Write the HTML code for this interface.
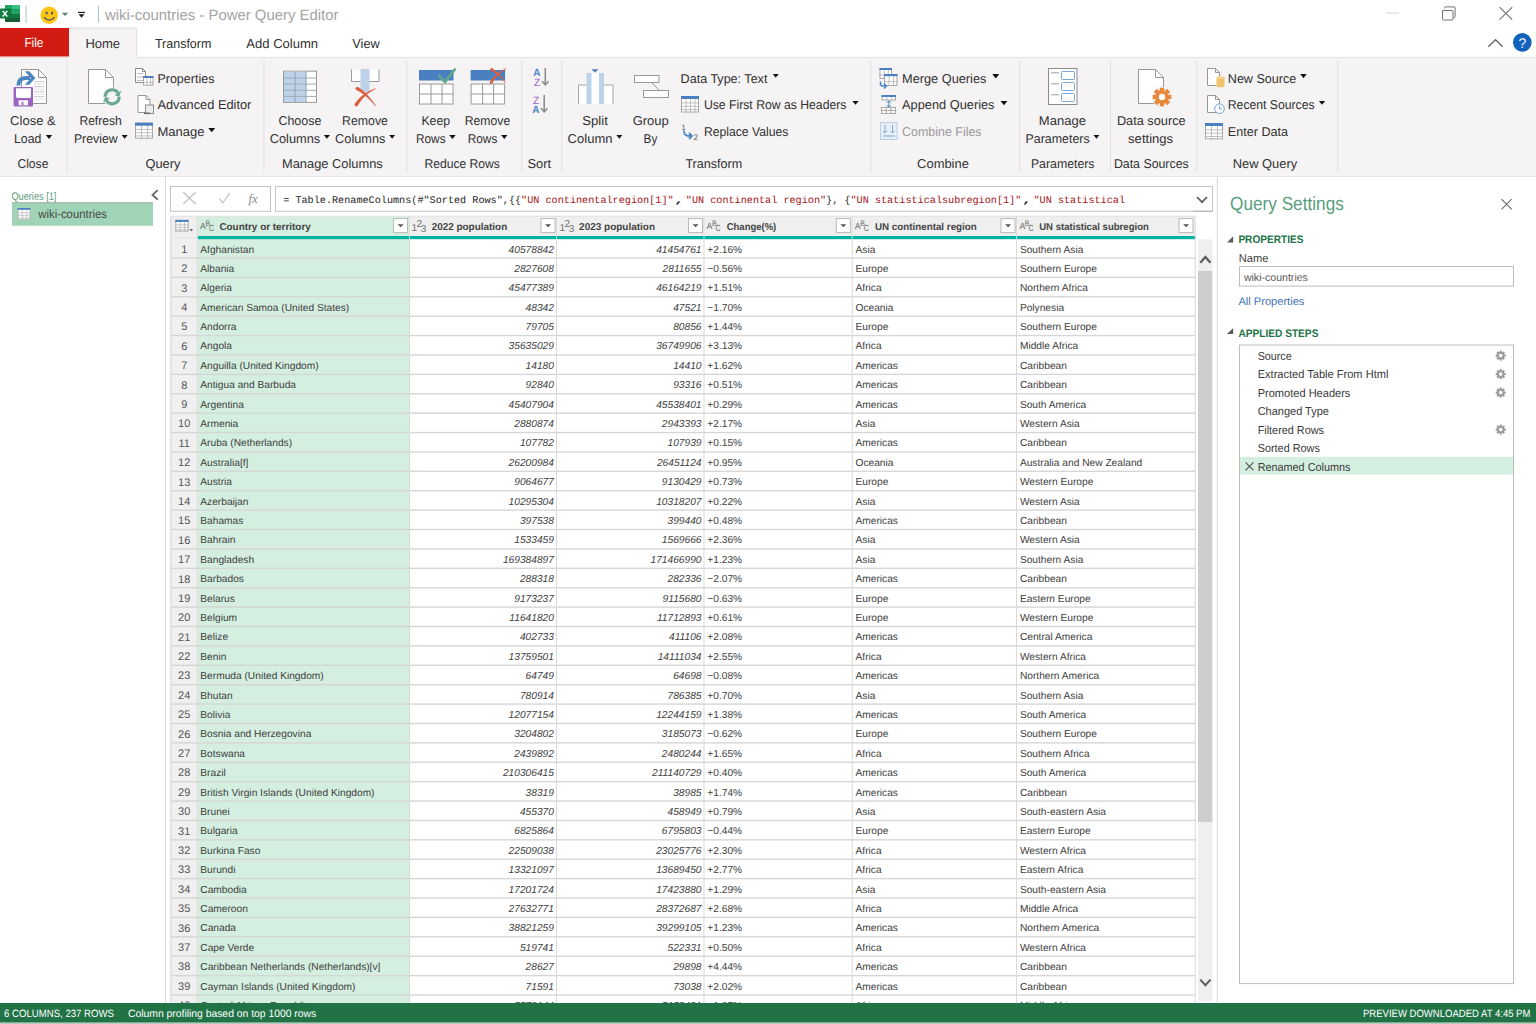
<!DOCTYPE html><html><head><meta charset="utf-8"><title>wiki-countries - Power Query Editor</title><style>html,body{margin:0;padding:0;background:#fff;overflow:hidden;width:1536px;height:1024px}svg{display:block;font-family:"Liberation Sans",sans-serif}</style></head><body>
<svg width="1536" height="1024" viewBox="0 0 1536 1024" text-rendering="geometricPrecision">
<rect x="0" y="0" width="1536" height="1024" fill="#ffffff" />
<g><rect x="5" y="5" width="15" height="17" rx="0.8" fill="#185c37"/><rect x="5" y="5" width="7" height="4.6" fill="#21a366"/><rect x="12" y="5" width="8" height="4.6" rx="0.6" fill="#33c481"/><rect x="5" y="9.6" width="15" height="4.4" fill="#21a366"/><rect x="5" y="14" width="15" height="4.2" fill="#107c41"/><rect x="0" y="8.6" width="10.6" height="9.9" rx="0.6" fill="#0f7b3f"/><rect x="10.6" y="9" width="0.8" height="9.5" fill="#0d5a30" opacity="0.6"/><path d="M2.7 10.9l4.6 5.6M7.3 10.9l-4.6 5.6" stroke="#fff" stroke-width="1.4"/></g>
<rect x="25.6" y="6" width="1" height="17" fill="#a9c6bb"/>
<circle cx="49.2" cy="15.2" r="8.7" fill="#fdc617"/><ellipse cx="46.6" cy="13" rx="1.2" ry="1.55" fill="#555a60"/><ellipse cx="52" cy="13" rx="1.2" ry="1.55" fill="#555a60"/><path d="M44 17.3q5.2 5.6 10.6 0" stroke="#555a60" stroke-width="1.4" fill="none"/>
<path d="M61.8 12.7h6.4l-3.2 3.4z" fill="#5e7f73"/>
<rect x="78" y="11.8" width="7" height="1.2" fill="#222"/><path d="M78.5 14.3h6l-3 3.4z" fill="#222"/>
<rect x="98" y="6" width="1" height="17" fill="#a9c6bb"/>
<text x="105.00" y="19.50" font-size="15" fill="#a4a4a4" textLength="233.40" lengthAdjust="spacingAndGlyphs" >wiki-countries - Power Query Editor</text>
<rect x="1386" y="12.5" width="13" height="1" fill="#d4d4d4"/>
<path d="M1442.5 10.5h9.5a1 1 0 0 1 1 1v7.5a1 1 0 0 1-1 1h-8.5a1 1 0 0 1-1-1z" fill="none" stroke="#707070" stroke-width="1"/><path d="M1444.5 8.5v-0.6a1 1 0 0 1 1-1h8.6a1 1 0 0 1 1 1v8.6a1 1 0 0 1-1 1h-0.6" fill="none" stroke="#707070" stroke-width="1"/>
<path d="M1499.6 7.2l12.6 12.4M1512.2 7.2l-12.6 12.4" stroke="#707070" stroke-width="1.1"/>
<rect x="0" y="28" width="69" height="28.5" fill="#d21c13" />
<text x="24.40" y="47.30" font-size="13" fill="#ffffff" textLength="19.00" lengthAdjust="spacingAndGlyphs" >File</text>
<rect x="69" y="27.7" width="67.5" height="30" fill="#f5f3f4" />
<rect x="69" y="27.7" width="68" height="1" fill="#dedede"/>
<rect x="136.2" y="27.7" width="1" height="29.900000000000002" fill="#dedede"/>
<text x="85.40" y="47.80" font-size="13" fill="#303030" textLength="34.70" lengthAdjust="spacingAndGlyphs" >Home</text>
<text x="154.90" y="47.80" font-size="13" fill="#303030" textLength="56.50" lengthAdjust="spacingAndGlyphs" >Transform</text>
<text x="246.30" y="47.80" font-size="13" fill="#303030" textLength="71.80" lengthAdjust="spacingAndGlyphs" >Add Column</text>
<text x="352.30" y="47.80" font-size="13" fill="#303030" textLength="27.50" lengthAdjust="spacingAndGlyphs" >View</text>
<path d="M1488.3 46.8l7.2-7.1 7.2 7.1" fill="none" stroke="#6b6b6b" stroke-width="1.5"/>
<circle cx="1522.3" cy="42.4" r="9.3" fill="#1262bd"/>
<text x="1522.30" y="47.60" font-size="14" fill="#ffffff" text-anchor="middle" >?</text>
<rect x="0" y="57.6" width="1536" height="119" fill="#f5f3f4" />
<rect x="0" y="57" width="69" height="1" fill="#e3e3e3"/>
<rect x="136.5" y="57" width="1399.5" height="1" fill="#e3e3e3"/>
<rect x="0" y="176" width="1536" height="1" fill="#e3e3e3"/>
<rect x="66.6" y="61" width="1" height="110.5" fill="#e2e0e1"/>
<rect x="263.4" y="61" width="1" height="110.5" fill="#e2e0e1"/>
<rect x="406.2" y="61" width="1" height="110.5" fill="#e2e0e1"/>
<rect x="521.2" y="61" width="1" height="110.5" fill="#e2e0e1"/>
<rect x="561.4" y="61" width="1" height="110.5" fill="#e2e0e1"/>
<rect x="870.3" y="61" width="1" height="110.5" fill="#e2e0e1"/>
<rect x="1019.2" y="61" width="1" height="110.5" fill="#e2e0e1"/>
<rect x="1110.0" y="61" width="1" height="110.5" fill="#e2e0e1"/>
<rect x="1196.3" y="61" width="1" height="110.5" fill="#e2e0e1"/>
<rect x="1337.3" y="61" width="1" height="110.5" fill="#e2e0e1"/>
<path d="M21.5 69.5h17l8 8v26h-25z" fill="#ffffff" stroke="#979797" stroke-width="1"/><path d="M38.5 69.5v8h8" fill="none" stroke="#979797" stroke-width="1"/>
<rect x="34" y="81.2" width="10.5" height="1" fill="#c9c9c9"/>
<rect x="34" y="83.7" width="10.5" height="1" fill="#e2e2e2"/>
<rect x="34" y="86.2" width="10.5" height="1" fill="#c9c9c9"/>
<rect x="34" y="88.7" width="10.5" height="1" fill="#e2e2e2"/>
<rect x="34" y="91.2" width="10.5" height="1" fill="#c9c9c9"/>
<rect x="34" y="93.7" width="10.5" height="1" fill="#e2e2e2"/>
<rect x="34" y="96.2" width="10.5" height="1" fill="#c9c9c9"/>
<rect x="34" y="98.7" width="10.5" height="1" fill="#e2e2e2"/>
<path d="M18.3 85.5 C18.3 80.5 21 78 26.5 78 H30" fill="none" stroke="#4a86c0" stroke-width="3.8"/><path d="M24.8 71.2 H29.2 L35.4 78 L29.2 84.8 H24.8 L31 78z" fill="#4a86c0"/>
<rect x="13.6" y="87" width="19.4" height="19.5" rx="1.3" fill="#9b62c0"/><path d="M16 88.2h15v8.4a1.4 1.4 0 0 1-1.4 1.4h-12.2a1.4 1.4 0 0 1-1.4-1.4z" fill="#ffffff"/><rect x="18.6" y="100.3" width="9.4" height="5" fill="#ffffff"/><rect x="21.6" y="101.8" width="1.8" height="3.5" fill="#9b62c0"/>
<text x="10.10" y="124.90" font-size="12.8" fill="#303030" textLength="45.70" lengthAdjust="spacingAndGlyphs" >Close &amp;</text>
<text x="14.00" y="142.90" font-size="12.8" fill="#303030" textLength="27.30" lengthAdjust="spacingAndGlyphs" >Load</text>
<path d="M45.8 135.0h6.4l-3.2 3.968z" fill="#111111"/>
<text x="17.40" y="167.90" font-size="12.8" fill="#303030" textLength="31.00" lengthAdjust="spacingAndGlyphs" >Close</text>
<path d="M88.5 69.5h17l8 8v26h-25z" fill="#ffffff" stroke="#979797" stroke-width="1"/><path d="M105.5 69.5v8h8" fill="none" stroke="#979797" stroke-width="1"/>
<circle cx="112.2" cy="96.8" r="9.6" fill="#f5f3f4"/>
<g><path d="M105.20 96.80A7.0 7.0 0 0 1 118.14 93.09" fill="none" stroke="#6aa893" stroke-width="3.1"/><path d="M119.20 96.80L121.43 90.81L114.72 95.17z" fill="#6aa893"/><path d="M119.20 96.80A7.0 7.0 0 0 1 106.26 100.51" fill="none" stroke="#6aa893" stroke-width="3.1"/><path d="M105.20 96.80L102.97 102.79L109.68 98.43z" fill="#6aa893"/></g>
<text x="79.40" y="124.90" font-size="12.8" fill="#303030" textLength="42.40" lengthAdjust="spacingAndGlyphs" >Refresh</text>
<text x="73.90" y="142.90" font-size="12.8" fill="#303030" textLength="43.70" lengthAdjust="spacingAndGlyphs" >Preview</text>
<path d="M121.6 135.0h6.100000000000003l-3.0500000000000016 3.782000000000002z" fill="#111111"/>
<path d="M135.5 68.5h7l3 3v11h-10z" fill="#ffffff" stroke="#8c8c8c" stroke-width="1"/><path d="M142.5 68.5v3h3" fill="none" stroke="#8c8c8c" stroke-width="1"/>
<rect x="137" y="73" width="6" height="1" fill="#b9b9b9"/>
<rect x="137" y="76.5" width="6" height="1" fill="#b9b9b9"/>
<rect x="137" y="80" width="6" height="1" fill="#b9b9b9"/>
<rect x="143.5" y="76.5" width="9.5" height="8.6" fill="#ffffff" stroke="#a8a8a8" stroke-width="1"/>
<rect x="146.5" y="76" width="1" height="9.6" fill="#a8a8a8" opacity="0.7"/>
<rect x="150.0" y="76" width="1" height="9.6" fill="#a8a8a8" opacity="0.7"/>
<rect x="143" y="81.8" width="10.5" height="1" fill="#a8a8a8" opacity="0.7"/>
<rect x="143" y="76" width="10.5" height="2" fill="#4b7fc1" />
<text x="157.40" y="82.50" font-size="12.8" fill="#303030" textLength="57.00" lengthAdjust="spacingAndGlyphs" >Properties</text>
<path d="M138.0 95.5h8l4 4v13h-12z" fill="#ffffff" stroke="#979797" stroke-width="1"/><path d="M146.0 95.5v4h4" fill="none" stroke="#979797" stroke-width="1"/>
<rect x="145.5" y="105" width="8" height="8.5" fill="#ececec" stroke="#8c8c8c" stroke-width="1"/><rect x="144" y="112.5" width="6" height="1.6" fill="#6a6a6a"/>
<text x="157.40" y="109.30" font-size="12.8" fill="#303030" textLength="94.00" lengthAdjust="spacingAndGlyphs" >Advanced Editor</text>
<rect x="135.5" y="123.2" width="17" height="15" fill="#ffffff" stroke="#a8a8a8" stroke-width="1"/>
<rect x="141.0" y="122.7" width="1" height="16" fill="#a8a8a8" opacity="0.7"/>
<rect x="147.0" y="122.7" width="1" height="16" fill="#a8a8a8" opacity="0.7"/>
<rect x="135" y="128.9" width="18" height="1" fill="#a8a8a8" opacity="0.7"/>
<rect x="135" y="132.2" width="18" height="1" fill="#a8a8a8" opacity="0.7"/>
<rect x="135" y="135.4" width="18" height="1" fill="#a8a8a8" opacity="0.7"/>
<rect x="135" y="122.7" width="18" height="3" fill="#4b7fc1" />
<text x="157.40" y="136.40" font-size="12.8" fill="#303030" textLength="47.00" lengthAdjust="spacingAndGlyphs" >Manage</text>
<path d="M208.3 128.00000000000003h6.9l-3.45 4.2780000000000005z" fill="#111111"/>
<text x="145.40" y="167.90" font-size="12.8" fill="#303030" textLength="35.00" lengthAdjust="spacingAndGlyphs" >Query</text>
<rect x="283.5" y="71.2" width="33" height="31.2" fill="#ffffff" stroke="#9a9a9a" stroke-width="1"/>
<rect x="284" y="71.7" width="22" height="30.3" fill="#bcd3ea" />
<rect x="294.6" y="71.5" width="1" height="31.0" fill="#9aa4ad"/>
<rect x="305.6" y="71.5" width="1" height="31.0" fill="#9aa4ad"/>
<rect x="283.5" y="77.5" width="33.0" height="1" fill="#a3acb3"/>
<rect x="283.5" y="83.6" width="33.0" height="1" fill="#a3acb3"/>
<rect x="283.5" y="89.8" width="33.0" height="1" fill="#a3acb3"/>
<rect x="283.5" y="95.9" width="33.0" height="1" fill="#a3acb3"/>
<path d="M351.5 69.5v12h27.5v-12" fill="#ffffff" stroke="#9a9a9a" stroke-width="1"/>
<rect x="360.5" y="69" width="9" height="23" fill="#bdd2e8" />
<path d="M356.38 90.09L357.76 90.78L359.14 91.54L360.52 92.37L361.89 93.28L363.26 94.25L364.62 95.30L365.98 96.41L367.33 97.60L368.67 98.86L370.01 100.19L371.34 101.60L372.66 103.07L373.97 104.62L375.27 106.23L375.93 105.77L374.76 104.02L373.58 102.34L372.38 100.72L371.17 99.17L369.93 97.68L368.69 96.25L367.42 94.89L366.14 93.59L364.83 92.35L363.51 91.17L362.17 90.06L360.81 89.01L359.43 88.03L358.02 87.11z" fill="#dc5f42"/><circle cx="357.2" cy="88.6" r="1.7" fill="#dc5f42"/>
<path d="M357.82 105.56L358.68 104.08L359.61 102.65L360.59 101.26L361.64 99.92L362.75 98.61L363.93 97.36L365.18 96.15L366.49 94.98L367.86 93.86L369.31 92.79L370.82 91.76L372.40 90.78L374.04 89.85L375.76 88.97L375.44 88.23L373.62 88.95L371.84 89.72L370.12 90.55L368.45 91.43L366.84 92.38L365.28 93.39L363.77 94.45L362.32 95.58L360.92 96.77L359.58 98.02L358.29 99.33L357.06 100.71L355.89 102.14L354.78 103.64z" fill="#dc5f42"/><circle cx="356.3" cy="104.6" r="1.8" fill="#dc5f42"/>
<text x="278.40" y="124.90" font-size="12.8" fill="#303030" textLength="43.00" lengthAdjust="spacingAndGlyphs" >Choose</text>
<text x="269.80" y="142.90" font-size="12.8" fill="#303030" textLength="50.40" lengthAdjust="spacingAndGlyphs" >Columns</text>
<path d="M323.8 135.0h6.200000000000012l-3.100000000000006 3.8440000000000074z" fill="#111111"/>
<text x="342.00" y="124.90" font-size="12.8" fill="#303030" textLength="45.90" lengthAdjust="spacingAndGlyphs" >Remove</text>
<text x="335.10" y="142.90" font-size="12.8" fill="#303030" textLength="50.30" lengthAdjust="spacingAndGlyphs" >Columns</text>
<path d="M389.2 135.0h5.9l-2.95 3.6580000000000004z" fill="#111111"/>
<text x="282.00" y="167.90" font-size="12.8" fill="#303030" textLength="100.80" lengthAdjust="spacingAndGlyphs" >Manage Columns</text>
<rect x="419" y="70" width="34.5" height="10.5" fill="#4a7fc0" />
<rect x="419.5" y="84" width="33.5" height="20" fill="#ffffff" stroke="#9a9a9a" stroke-width="1"/>
<rect x="430.5" y="84" width="1" height="20" fill="#9a9a9a"/>
<rect x="441.5" y="84" width="1" height="20" fill="#9a9a9a"/>
<rect x="419" y="93.5" width="34.5" height="1" fill="#9a9a9a"/>
<path d="M438.5 75.5 L445 82 L455.5 68.5" stroke="#5ea98a" stroke-width="2.6" fill="none"/>
<rect x="470.6" y="70" width="34.5" height="10.5" fill="#4a7fc0" />
<rect x="471.1" y="84" width="33.5" height="20" fill="#ffffff" stroke="#9a9a9a" stroke-width="1"/>
<rect x="482.1" y="84" width="1" height="20" fill="#9a9a9a"/>
<rect x="493.1" y="84" width="1" height="20" fill="#9a9a9a"/>
<rect x="470.6" y="93.5" width="34.5" height="1" fill="#9a9a9a"/>
<path d="M492.42 83.19L493.04 82.00L493.71 80.84L494.43 79.71L495.22 78.60L496.05 77.51L496.95 76.45L497.90 75.41L498.91 74.40L499.97 73.42L501.10 72.46L502.28 71.53L503.52 70.63L504.81 69.75L506.17 68.91L505.83 68.29L504.38 69.02L502.98 69.78L501.63 70.58L500.32 71.42L499.07 72.29L497.86 73.19L496.70 74.14L495.59 75.12L494.53 76.14L493.52 77.20L492.56 78.29L491.65 79.43L490.79 80.60L489.98 81.81z" fill="#dc5f42"/><circle cx="491.2" cy="82.5" r="1.4" fill="#dc5f42"/>
<path d="M490.90 70.40L491.96 71.01L493.01 71.67L494.06 72.37L495.10 73.11L496.14 73.90L497.17 74.74L498.20 75.62L499.22 76.54L500.24 77.51L501.25 78.52L502.25 79.57L503.25 80.67L504.24 81.82L505.22 83.01L505.78 82.59L504.90 81.31L504.00 80.06L503.10 78.86L502.18 77.69L501.25 76.57L500.30 75.48L499.35 74.43L498.38 73.42L497.40 72.46L496.41 71.53L495.40 70.64L494.38 69.78L493.35 68.97L492.30 68.20z" fill="#dc5f42"/><circle cx="491.6" cy="69.3" r="1.3" fill="#dc5f42"/>
<text x="421.40" y="124.90" font-size="12.8" fill="#303030" textLength="28.80" lengthAdjust="spacingAndGlyphs" >Keep</text>
<text x="415.90" y="142.90" font-size="12.8" fill="#303030" textLength="29.70" lengthAdjust="spacingAndGlyphs" >Rows</text>
<path d="M449.2 135.0h6.500000000000023l-3.2500000000000115 4.0300000000000145z" fill="#111111"/>
<text x="464.70" y="124.90" font-size="12.8" fill="#303030" textLength="45.50" lengthAdjust="spacingAndGlyphs" >Remove</text>
<text x="467.70" y="142.90" font-size="12.8" fill="#303030" textLength="29.70" lengthAdjust="spacingAndGlyphs" >Rows</text>
<path d="M501.1 135.0h6.299999999999978l-3.149999999999989 3.905999999999986z" fill="#111111"/>
<text x="424.40" y="167.90" font-size="12.8" fill="#303030" textLength="75.50" lengthAdjust="spacingAndGlyphs" >Reduce Rows</text>
<text x="533.20" y="76.20" font-size="10.5" fill="#4a86c8" font-weight="700" textLength="7.20" lengthAdjust="spacingAndGlyphs" >A</text>
<text x="534.00" y="85.80" font-size="10.5" fill="#9c64c6" textLength="6.20" lengthAdjust="spacingAndGlyphs" >Z</text>
<path d="M545.3 68v16.3M542 81.2l3.3 3.6 3.3-3.6" stroke="#8a8a8a" stroke-width="1.5" fill="none"/>
<text x="533.00" y="103.60" font-size="10.5" fill="#9c64c6" textLength="6.20" lengthAdjust="spacingAndGlyphs" >Z</text>
<text x="532.30" y="113.00" font-size="10.5" fill="#4a86c8" font-weight="700" textLength="7.20" lengthAdjust="spacingAndGlyphs" >A</text>
<path d="M544.2 95v16.3M540.9 108.2l3.3 3.6 3.3-3.6" stroke="#8a8a8a" stroke-width="1.5" fill="none"/>
<text x="527.40" y="167.90" font-size="12.8" fill="#303030" textLength="23.70" lengthAdjust="spacingAndGlyphs" >Sort</text>
<path d="M578.5 104v-19h8v-12h13v12h13.5v19z" fill="#ffffff"/><path d="M578.5 104v-19h8M599.5 85h13.5v19" fill="none" stroke="#a8a8a8" stroke-width="1"/>
<rect x="586.5" y="73" width="5" height="31" fill="#bcd3ea" />
<rect x="599" y="73" width="5" height="31" fill="#bcd3ea" />
<path d="M591.5 69.2h7l-3.5 3.3z" fill="#4a7fc0"/>
<text x="582.20" y="124.90" font-size="12.8" fill="#303030" textLength="25.70" lengthAdjust="spacingAndGlyphs" >Split</text>
<text x="567.60" y="142.90" font-size="12.8" fill="#303030" textLength="44.90" lengthAdjust="spacingAndGlyphs" >Column</text>
<path d="M616.4 135.0h5.9l-2.95 3.6580000000000004z" fill="#111111"/>
<rect x="634.5" y="75.5" width="24.5" height="7" fill="#ffffff" stroke="#9a9a9a" stroke-width="1"/><rect x="643.5" y="90.5" width="25" height="7" fill="#ffffff" stroke="#9a9a9a" stroke-width="1"/><path d="M651.5 82.5L659.5 90.5" stroke="#9a9a9a" stroke-width="1"/>
<text x="632.70" y="124.90" font-size="12.8" fill="#303030" textLength="36.00" lengthAdjust="spacingAndGlyphs" >Group</text>
<text x="643.50" y="142.90" font-size="12.8" fill="#303030" textLength="13.80" lengthAdjust="spacingAndGlyphs" >By</text>
<text x="680.60" y="82.50" font-size="12.8" fill="#303030" textLength="86.80" lengthAdjust="spacingAndGlyphs" >Data Type: Text</text>
<path d="M772.8 74.1h5.9l-2.95 3.6580000000000004z" fill="#111111"/>
<rect x="681.5" y="96.5" width="17" height="15.5" fill="#ffffff" stroke="#a8a8a8" stroke-width="1"/>
<rect x="685.5" y="96" width="1" height="16.5" fill="#a8a8a8" opacity="0.7"/>
<rect x="690.0" y="96" width="1" height="16.5" fill="#a8a8a8" opacity="0.7"/>
<rect x="694.5" y="96" width="1" height="16.5" fill="#a8a8a8" opacity="0.7"/>
<rect x="681" y="102.4" width="18" height="1" fill="#a8a8a8" opacity="0.7"/>
<rect x="681" y="105.8" width="18" height="1" fill="#a8a8a8" opacity="0.7"/>
<rect x="681" y="109.1" width="18" height="1" fill="#a8a8a8" opacity="0.7"/>
<rect x="681" y="96" width="18" height="3" fill="#4b7fc1" />
<text x="703.90" y="109.30" font-size="12.8" fill="#303030" textLength="142.50" lengthAdjust="spacingAndGlyphs" >Use First Row as Headers</text>
<path d="M852.3 100.89999999999999h6.4l-3.2 3.968z" fill="#111111"/>
<text x="681.50" y="130.00" font-size="7.5" fill="#555" >1</text>
<path d="M684 130.5 C684 135 686 136 691 136" stroke="#4a86c8" stroke-width="1.8" fill="none"/><path d="M689 133 l3 3 -3 3" stroke="#4a86c8" stroke-width="1.8" fill="none"/>
<text x="693.50" y="139.50" font-size="8" fill="#555" >2</text>
<text x="703.90" y="136.40" font-size="12.8" fill="#303030" textLength="84.50" lengthAdjust="spacingAndGlyphs" >Replace Values</text>
<text x="685.40" y="167.90" font-size="12.8" fill="#303030" textLength="56.80" lengthAdjust="spacingAndGlyphs" >Transform</text>
<rect x="880.0" y="68.5" width="11.5" height="10" fill="#ffffff" stroke="#a8a8a8" stroke-width="1"/>
<rect x="883.7" y="68" width="1" height="11" fill="#a8a8a8" opacity="0.7"/>
<rect x="887.8" y="68" width="1" height="11" fill="#a8a8a8" opacity="0.7"/>
<rect x="879.5" y="74.5" width="12.5" height="1" fill="#a8a8a8" opacity="0.7"/>
<rect x="879.5" y="68" width="12.5" height="2" fill="#4b7fc1" />
<rect x="884.5" y="74.5" width="12.5" height="11" fill="#ffffff" stroke="#a8a8a8" stroke-width="1"/>
<rect x="888.5" y="74" width="1" height="12" fill="#a8a8a8" opacity="0.7"/>
<rect x="893.0" y="74" width="1" height="12" fill="#a8a8a8" opacity="0.7"/>
<rect x="884" y="81.1" width="13.5" height="1" fill="#a8a8a8" opacity="0.7"/>
<rect x="884" y="74" width="13.5" height="2.2" fill="#4b7fc1" />
<path d="M880.5 81.5v2.5a2 2 0 0 0 2 2h3" stroke="#4a86c8" stroke-width="1.6" fill="none"/><path d="M884 83.5l2.5 2.5-2.5 2.5" stroke="#4a86c8" stroke-width="1.5" fill="none"/>
<text x="902.00" y="82.50" font-size="12.8" fill="#303030" textLength="84.40" lengthAdjust="spacingAndGlyphs" >Merge Queries</text>
<path d="M992.3 74.1h6.9l-3.45 4.2780000000000005z" fill="#111111"/>
<rect x="882.0" y="95.5" width="13.5" height="4.5" fill="#ffffff" stroke="#a8a8a8" stroke-width="1"/>
<rect x="886.3" y="95" width="1" height="5.5" fill="#a8a8a8" opacity="0.7"/>
<rect x="891.2" y="95" width="1" height="5.5" fill="#a8a8a8" opacity="0.7"/>
<rect x="881.5" y="95" width="14.5" height="2" fill="#4b7fc1" />
<path d="M888.8 101v6M886.8 102.8l2 -2 2 2M886.8 105.2l2 2 2-2" stroke="#4a86c8" stroke-width="1" fill="none"/>
<rect x="881.5" y="107.5" width="14" height="6" fill="#ffffff" stroke="#a8a8a8" stroke-width="1"/><path d="M886.2 107.5v6M890.8 107.5v6M881.5 110.5h14" stroke="#a8a8a8" stroke-width="1"/>
<text x="902.00" y="109.30" font-size="12.8" fill="#303030" textLength="92.50" lengthAdjust="spacingAndGlyphs" >Append Queries</text>
<path d="M1000.5 100.89999999999999h6.9l-3.45 4.2780000000000005z" fill="#111111"/>
<rect x="880.5" y="122.5" width="16.5" height="17" fill="#e6eef8" stroke="#b9cde6" stroke-width="1"/><path d="M885 125v8M882.8 130.8l2.2 2.2 2.2-2.2M892.5 125v8M890.3 130.8l2.2 2.2 2.2-2.2M883 136h12" stroke="#8aa6c8" stroke-width="1" fill="none"/>
<text x="902.00" y="136.40" font-size="12.8" fill="#9a9a9a" textLength="79.60" lengthAdjust="spacingAndGlyphs" >Combine Files</text>
<text x="917.10" y="167.90" font-size="12.8" fill="#303030" textLength="51.80" lengthAdjust="spacingAndGlyphs" >Combine</text>
<rect x="1048.5" y="68.5" width="28.5" height="36" fill="#ffffff" stroke="#8c8c8c" stroke-width="1"/>
<rect x="1051" y="72.3" width="8" height="1" fill="#a0a0a0"/>
<rect x="1061.5" y="71.5" width="13" height="8" rx="1" fill="#ffffff" stroke="#7aa5d8" stroke-width="1"/>
<rect x="1051" y="83.3" width="8" height="1" fill="#a0a0a0"/>
<rect x="1061.5" y="82.5" width="13" height="8" rx="1" fill="#ffffff" stroke="#7aa5d8" stroke-width="1"/>
<rect x="1051" y="94.3" width="8" height="1" fill="#a0a0a0"/>
<rect x="1061.5" y="93.5" width="13" height="8" rx="1" fill="#ffffff" stroke="#7aa5d8" stroke-width="1"/>
<text x="1038.80" y="124.90" font-size="12.8" fill="#303030" textLength="47.10" lengthAdjust="spacingAndGlyphs" >Manage</text>
<text x="1025.60" y="142.90" font-size="12.8" fill="#303030" textLength="64.00" lengthAdjust="spacingAndGlyphs" >Parameters</text>
<path d="M1093.5 135.0h5.9l-2.95 3.6580000000000004z" fill="#111111"/>
<text x="1030.90" y="167.90" font-size="12.8" fill="#303030" textLength="63.60" lengthAdjust="spacingAndGlyphs" >Parameters</text>
<path d="M1138.5 69.5h17l8 8v26h-25z" fill="#ffffff" stroke="#979797" stroke-width="1"/><path d="M1155.5 69.5v8h8" fill="none" stroke="#979797" stroke-width="1"/>
<circle cx="1162" cy="97" r="10.2" fill="#f5f3f4"/>
<g><rect x="1159.8" y="87.7" width="4.4" height="5" fill="#e8883a" transform="rotate(0 1162 97)"/><rect x="1159.8" y="87.7" width="4.4" height="5" fill="#e8883a" transform="rotate(45 1162 97)"/><rect x="1159.8" y="87.7" width="4.4" height="5" fill="#e8883a" transform="rotate(90 1162 97)"/><rect x="1159.8" y="87.7" width="4.4" height="5" fill="#e8883a" transform="rotate(135 1162 97)"/><rect x="1159.8" y="87.7" width="4.4" height="5" fill="#e8883a" transform="rotate(180 1162 97)"/><rect x="1159.8" y="87.7" width="4.4" height="5" fill="#e8883a" transform="rotate(225 1162 97)"/><rect x="1159.8" y="87.7" width="4.4" height="5" fill="#e8883a" transform="rotate(270 1162 97)"/><rect x="1159.8" y="87.7" width="4.4" height="5" fill="#e8883a" transform="rotate(315 1162 97)"/><circle cx="1162" cy="97" r="6.8" fill="#e8883a"/><circle cx="1162" cy="97" r="3.2" fill="#ffffff"/></g>
<text x="1116.90" y="124.90" font-size="12.8" fill="#303030" textLength="68.70" lengthAdjust="spacingAndGlyphs" >Data source</text>
<text x="1128.10" y="142.90" font-size="12.8" fill="#303030" textLength="45.00" lengthAdjust="spacingAndGlyphs" >settings</text>
<text x="1113.90" y="167.90" font-size="12.8" fill="#303030" textLength="74.80" lengthAdjust="spacingAndGlyphs" >Data Sources</text>
<path d="M1207.5 68.5h8l4 4v13h-12z" fill="#ffffff" stroke="#979797" stroke-width="1"/><path d="M1215.5 68.5v4h4" fill="none" stroke="#979797" stroke-width="1"/>
<path d="M1216.5 77.5v8.2a4 1.6 0 0 0 8 0v-8.2z" fill="#f0c46c"/><ellipse cx="1220.5" cy="77.5" rx="4" ry="1.6" fill="#f6d48f"/>
<text x="1227.80" y="82.50" font-size="12.8" fill="#303030" textLength="68.50" lengthAdjust="spacingAndGlyphs" >New Source</text>
<path d="M1300.2 74.1h6.499999999999909l-3.2499999999999547 4.029999999999943z" fill="#111111"/>
<path d="M1207.5 95.5h8l4 4v13h-12z" fill="#ffffff" stroke="#979797" stroke-width="1"/><path d="M1215.5 95.5v4h4" fill="none" stroke="#979797" stroke-width="1"/>
<circle cx="1219.5" cy="108.7" r="4.8" fill="#ffffff" stroke="#6f9fd6" stroke-width="1"/><path d="M1219.5 105.8v3.2h2.4" stroke="#6f9fd6" stroke-width="1" fill="none"/>
<text x="1227.80" y="109.30" font-size="12.8" fill="#303030" textLength="86.80" lengthAdjust="spacingAndGlyphs" >Recent Sources</text>
<path d="M1318.8999999999999 100.89999999999999h6.200000000000182l-3.100000000000091 3.844000000000113z" fill="#111111"/>
<rect x="1205.5" y="123.5" width="17" height="15.3" fill="#ffffff" stroke="#a8a8a8" stroke-width="1"/>
<rect x="1211.0" y="123" width="1" height="16.3" fill="#a8a8a8" opacity="0.7"/>
<rect x="1217.0" y="123" width="1" height="16.3" fill="#a8a8a8" opacity="0.7"/>
<rect x="1205" y="129.3" width="18" height="1" fill="#a8a8a8" opacity="0.7"/>
<rect x="1205" y="132.7" width="18" height="1" fill="#a8a8a8" opacity="0.7"/>
<rect x="1205" y="136.0" width="18" height="1" fill="#a8a8a8" opacity="0.7"/>
<rect x="1205" y="123" width="18" height="3" fill="#4b7fc1" />
<text x="1227.80" y="136.40" font-size="12.8" fill="#303030" textLength="60.20" lengthAdjust="spacingAndGlyphs" >Enter Data</text>
<text x="1232.70" y="167.90" font-size="12.8" fill="#303030" textLength="64.50" lengthAdjust="spacingAndGlyphs" >New Query</text>
<rect x="165" y="177" width="1" height="826" fill="#d9d9d9"/>
<text x="11.40" y="199.60" font-size="11" fill="#5d9c7e" textLength="45.00" lengthAdjust="spacingAndGlyphs" >Queries [1]</text>
<path d="M157.8 190.2l-5.3 4.7 5.3 4.7" fill="none" stroke="#666" stroke-width="1.8"/>
<rect x="12" y="202.4" width="141" height="23.3" fill="#9fd5b6" />
<rect x="12" y="202.2" width="141" height="1.2" fill="#a9b4ae"/>
<rect x="18.0" y="208.5" width="12" height="10.8" fill="#ffffff" stroke="#b8b8b8" stroke-width="1"/>
<rect x="21.8" y="208" width="1" height="11.8" fill="#b8b8b8" opacity="0.7"/>
<rect x="26.2" y="208" width="1" height="11.8" fill="#b8b8b8" opacity="0.7"/>
<rect x="17.5" y="212.3" width="13" height="1" fill="#b8b8b8" opacity="0.7"/>
<rect x="17.5" y="214.8" width="13" height="1" fill="#b8b8b8" opacity="0.7"/>
<rect x="17.5" y="217.3" width="13" height="1" fill="#b8b8b8" opacity="0.7"/>
<rect x="17.5" y="208" width="13" height="1.8" fill="#4b7fc1" />
<text x="38.30" y="218.40" font-size="12" fill="#474747" textLength="68.60" lengthAdjust="spacingAndGlyphs" >wiki-countries</text>
<rect x="170.5" y="186.5" width="100" height="24.8" fill="#ffffff" stroke="#c4c4c4" stroke-width="1"/>
<path d="M183.2 192.3l12.6 11.6M195.8 192.3l-12.6 11.6" stroke="#c2c2c2" stroke-width="1.3"/>
<path d="M219.2 198.6l3.6 4.2 7-9.6" stroke="#c2c2c2" stroke-width="1.3" fill="none"/>
<text x="248.50" y="203.00" font-size="13" fill="#8a8a8a" font-family="Liberation Serif" font-style="italic" >fx</text>
<rect x="275.5" y="186.5" width="937" height="24.8" fill="#ffffff" stroke="#c4c4c4" stroke-width="1"/>
<path d="M1197 197l5 5.2 5-5.2" fill="none" stroke="#5e5e5e" stroke-width="1.8"/>
<rect x="1193" y="210.6" width="20" height="1.2" fill="#b8b8b8"/>
<text x="283.20" y="202.60" font-size="10.17" fill="#1e1e1e" font-family="Liberation Mono" textLength="237.90" lengthAdjust="spacingAndGlyphs" >= Table.RenameColumns(#"Sorted Rows",{{</text>
<text x="521.10" y="202.60" font-size="10.17" fill="#a31515" font-family="Liberation Mono" textLength="152.50" lengthAdjust="spacingAndGlyphs" >"UN continentalregion[1]"</text>
<text x="673.60" y="202.60" font-size="10.17" fill="#1e1e1e" font-family="Liberation Mono" textLength="12.20" lengthAdjust="spacingAndGlyphs" >, </text>
<text x="685.80" y="202.60" font-size="10.17" fill="#a31515" font-family="Liberation Mono" textLength="140.30" lengthAdjust="spacingAndGlyphs" >"UN continental region"</text>
<text x="826.10" y="202.60" font-size="10.17" fill="#1e1e1e" font-family="Liberation Mono" textLength="24.40" lengthAdjust="spacingAndGlyphs" >}, {</text>
<text x="850.50" y="202.60" font-size="10.17" fill="#a31515" font-family="Liberation Mono" textLength="170.80" lengthAdjust="spacingAndGlyphs" >"UN statisticalsubregion[1]"</text>
<text x="1021.30" y="202.60" font-size="10.17" fill="#1e1e1e" font-family="Liberation Mono" textLength="12.20" lengthAdjust="spacingAndGlyphs" >, </text>
<text x="1033.50" y="202.60" font-size="10.17" fill="#a31515" font-family="Liberation Mono" textLength="91.50" lengthAdjust="spacingAndGlyphs" >"UN statistical</text>
<rect x="171" y="236" width="26.3" height="767" fill="#f0f0f0" />
<rect x="171" y="237.6" width="26.30000000000001" height="1" fill="#e2e2e2"/>
<rect x="197.8" y="216" width="211.7" height="787" fill="#d4eedf" />
<rect x="171" y="215.8" width="26.3" height="20.19999999999999" fill="#efefef" />
<rect x="410.3" y="215.8" width="146.2" height="20.19999999999999" fill="#efefef" />
<rect x="557.3" y="215.8" width="146.7" height="20.19999999999999" fill="#efefef" />
<rect x="704.8" y="215.8" width="147.40000000000003" height="20.19999999999999" fill="#efefef" />
<rect x="853.0" y="215.8" width="163.49999999999994" height="20.19999999999999" fill="#efefef" />
<rect x="1017.3" y="215.8" width="177.90000000000003" height="20.19999999999999" fill="#efefef" />
<rect x="171" y="215.8" width="1024.5" height="1" fill="#e4e4e4"/>
<rect x="197.8" y="236" width="997.5" height="3.2" fill="#00b3a1" />
<rect x="171" y="257.3" width="1024.5" height="1.4" fill="#d6d6d6"/>
<rect x="171" y="276.69" width="1024.5" height="1.4" fill="#d6d6d6"/>
<rect x="171" y="296.08" width="1024.5" height="1.4" fill="#d6d6d6"/>
<rect x="171" y="315.48" width="1024.5" height="1.4" fill="#d6d6d6"/>
<rect x="171" y="334.88" width="1024.5" height="1.4" fill="#d6d6d6"/>
<rect x="171" y="354.27" width="1024.5" height="1.4" fill="#d6d6d6"/>
<rect x="171" y="373.67" width="1024.5" height="1.4" fill="#d6d6d6"/>
<rect x="171" y="393.06" width="1024.5" height="1.4" fill="#d6d6d6"/>
<rect x="171" y="412.45" width="1024.5" height="1.4" fill="#d6d6d6"/>
<rect x="171" y="431.85" width="1024.5" height="1.4" fill="#d6d6d6"/>
<rect x="171" y="451.25" width="1024.5" height="1.4" fill="#d6d6d6"/>
<rect x="171" y="470.64" width="1024.5" height="1.4" fill="#d6d6d6"/>
<rect x="171" y="490.04" width="1024.5" height="1.4" fill="#d6d6d6"/>
<rect x="171" y="509.43" width="1024.5" height="1.4" fill="#d6d6d6"/>
<rect x="171" y="528.82" width="1024.5" height="1.4" fill="#d6d6d6"/>
<rect x="171" y="548.22" width="1024.5" height="1.4" fill="#d6d6d6"/>
<rect x="171" y="567.61" width="1024.5" height="1.4" fill="#d6d6d6"/>
<rect x="171" y="587.01" width="1024.5" height="1.4" fill="#d6d6d6"/>
<rect x="171" y="606.4" width="1024.5" height="1.4" fill="#d6d6d6"/>
<rect x="171" y="625.8" width="1024.5" height="1.4" fill="#d6d6d6"/>
<rect x="171" y="645.19" width="1024.5" height="1.4" fill="#d6d6d6"/>
<rect x="171" y="664.59" width="1024.5" height="1.4" fill="#d6d6d6"/>
<rect x="171" y="683.98" width="1024.5" height="1.4" fill="#d6d6d6"/>
<rect x="171" y="703.38" width="1024.5" height="1.4" fill="#d6d6d6"/>
<rect x="171" y="722.77" width="1024.5" height="1.4" fill="#d6d6d6"/>
<rect x="171" y="742.17" width="1024.5" height="1.4" fill="#d6d6d6"/>
<rect x="171" y="761.56" width="1024.5" height="1.4" fill="#d6d6d6"/>
<rect x="171" y="780.96" width="1024.5" height="1.4" fill="#d6d6d6"/>
<rect x="171" y="800.36" width="1024.5" height="1.4" fill="#d6d6d6"/>
<rect x="171" y="819.75" width="1024.5" height="1.4" fill="#d6d6d6"/>
<rect x="171" y="839.14" width="1024.5" height="1.4" fill="#d6d6d6"/>
<rect x="171" y="858.54" width="1024.5" height="1.4" fill="#d6d6d6"/>
<rect x="171" y="877.93" width="1024.5" height="1.4" fill="#d6d6d6"/>
<rect x="171" y="897.33" width="1024.5" height="1.4" fill="#d6d6d6"/>
<rect x="171" y="916.72" width="1024.5" height="1.4" fill="#d6d6d6"/>
<rect x="171" y="936.12" width="1024.5" height="1.4" fill="#d6d6d6"/>
<rect x="171" y="955.51" width="1024.5" height="1.4" fill="#d6d6d6"/>
<rect x="171" y="974.91" width="1024.5" height="1.4" fill="#d6d6d6"/>
<rect x="171" y="994.3" width="1024.5" height="1.4" fill="#d6d6d6"/>
<rect x="170.3" y="215.8" width="1" height="787.2" fill="#d4d4d4"/>
<rect x="196.8" y="215.8" width="1" height="787.2" fill="#d9d9d9"/>
<rect x="409.0" y="215.8" width="1" height="787.2" fill="#d9d9d9"/>
<rect x="556.0" y="215.8" width="1" height="787.2" fill="#d9d9d9"/>
<rect x="703.5" y="215.8" width="1" height="787.2" fill="#d9d9d9"/>
<rect x="851.7" y="215.8" width="1" height="787.2" fill="#d9d9d9"/>
<rect x="1016.0" y="215.8" width="1" height="787.2" fill="#d9d9d9"/>
<rect x="1194.7" y="215.8" width="1" height="787.2" fill="#d9d9d9"/>
<rect x="175.8" y="220.4" width="12.3" height="10.7" fill="#ffffff" stroke="#b0b0b0" stroke-width="1"/>
<rect x="179.7" y="219.9" width="1" height="11.7" fill="#b0b0b0" opacity="0.7"/>
<rect x="184.2" y="219.9" width="1" height="11.7" fill="#b0b0b0" opacity="0.7"/>
<rect x="175.3" y="224.3" width="13.3" height="1" fill="#b0b0b0" opacity="0.7"/>
<rect x="175.3" y="226.8" width="13.3" height="1" fill="#b0b0b0" opacity="0.7"/>
<rect x="175.3" y="229.2" width="13.3" height="1" fill="#b0b0b0" opacity="0.7"/>
<rect x="175.3" y="219.9" width="13.3" height="2" fill="#4b7fc1" />
<path d="M189.4 229.2h3.8l-1.9 2z" fill="#555"/>
<text x="200.10" y="229.20" font-size="8.8" fill="#6a6a6a" >A</text>
<text x="205.50" y="225.60" font-size="8.0" fill="#6a6a6a" textLength="4.60" lengthAdjust="spacingAndGlyphs" >B</text>
<text x="209.10" y="231.20" font-size="9.0" fill="#6a6a6a" textLength="5.00" lengthAdjust="spacingAndGlyphs" >C</text>
<text x="219.40" y="229.80" font-size="10" fill="#444444" font-weight="700" textLength="91.40" lengthAdjust="spacingAndGlyphs" >Country or territory</text>
<rect x="393.5" y="218.6" width="14" height="14" fill="#ffffff" stroke="#b9b9b9" stroke-width="1"/><path d="M397.6 224.3h6l-3 3z" fill="#555"/>
<text x="411.60" y="231.00" font-size="10" fill="#707070" >1</text>
<text x="416.50" y="227.00" font-size="10" fill="#707070" >2</text>
<text x="420.80" y="232.20" font-size="10" fill="#707070" >3</text>
<text x="431.70" y="229.80" font-size="10" fill="#444444" font-weight="700" textLength="75.50" lengthAdjust="spacingAndGlyphs" >2022 population</text>
<rect x="541.0" y="218.6" width="14" height="14" fill="#ffffff" stroke="#b9b9b9" stroke-width="1"/><path d="M545.1 224.3h6l-3 3z" fill="#555"/>
<text x="559.60" y="231.00" font-size="10" fill="#707070" >1</text>
<text x="564.50" y="227.00" font-size="10" fill="#707070" >2</text>
<text x="568.80" y="232.20" font-size="10" fill="#707070" >3</text>
<text x="579.10" y="229.80" font-size="10" fill="#444444" font-weight="700" textLength="75.90" lengthAdjust="spacingAndGlyphs" >2023 population</text>
<rect x="688.5" y="218.6" width="14" height="14" fill="#ffffff" stroke="#b9b9b9" stroke-width="1"/><path d="M692.6 224.3h6l-3 3z" fill="#555"/>
<text x="706.60" y="229.20" font-size="8.8" fill="#6a6a6a" >A</text>
<text x="712.00" y="225.60" font-size="8.0" fill="#6a6a6a" textLength="4.60" lengthAdjust="spacingAndGlyphs" >B</text>
<text x="715.60" y="231.20" font-size="9.0" fill="#6a6a6a" textLength="5.00" lengthAdjust="spacingAndGlyphs" >C</text>
<text x="726.70" y="229.80" font-size="10" fill="#444444" font-weight="700" textLength="49.60" lengthAdjust="spacingAndGlyphs" >Change(%)</text>
<rect x="836.3" y="218.6" width="14" height="14" fill="#ffffff" stroke="#b9b9b9" stroke-width="1"/><path d="M840.4 224.3h6l-3 3z" fill="#555"/>
<text x="854.80" y="229.20" font-size="8.8" fill="#6a6a6a" >A</text>
<text x="860.20" y="225.60" font-size="8.0" fill="#6a6a6a" textLength="4.60" lengthAdjust="spacingAndGlyphs" >B</text>
<text x="863.80" y="231.20" font-size="9.0" fill="#6a6a6a" textLength="5.00" lengthAdjust="spacingAndGlyphs" >C</text>
<text x="874.90" y="229.80" font-size="10" fill="#444444" font-weight="700" textLength="101.90" lengthAdjust="spacingAndGlyphs" >UN continental region</text>
<rect x="1001.0" y="218.6" width="14" height="14" fill="#ffffff" stroke="#b9b9b9" stroke-width="1"/><path d="M1005.1 224.3h6l-3 3z" fill="#555"/>
<text x="1019.40" y="229.20" font-size="8.8" fill="#6a6a6a" >A</text>
<text x="1024.80" y="225.60" font-size="8.0" fill="#6a6a6a" textLength="4.60" lengthAdjust="spacingAndGlyphs" >B</text>
<text x="1028.40" y="231.20" font-size="9.0" fill="#6a6a6a" textLength="5.00" lengthAdjust="spacingAndGlyphs" >C</text>
<text x="1039.20" y="229.80" font-size="10" fill="#444444" font-weight="700" textLength="109.70" lengthAdjust="spacingAndGlyphs" >UN statistical subregion</text>
<rect x="1179.0" y="218.6" width="14" height="14" fill="#ffffff" stroke="#b9b9b9" stroke-width="1"/><path d="M1183.1 224.3h6l-3 3z" fill="#555"/>
<g>
<text x="184.20" y="252.80" font-size="11" fill="#555555" text-anchor="middle" >1</text>
<text x="200.30" y="252.50" font-size="10.2" fill="#414141" >Afghanistan</text>
<text x="553.90" y="252.50" font-size="10.2" fill="#414141" font-style="italic" text-anchor="end" >40578842</text>
<text x="701.50" y="252.50" font-size="10.2" fill="#414141" font-style="italic" text-anchor="end" >41454761</text>
<text x="707.30" y="252.50" font-size="10.2" fill="#414141" >+2.16%</text>
<text x="855.50" y="252.50" font-size="10.2" fill="#414141" >Asia</text>
<text x="1019.90" y="252.50" font-size="10.2" fill="#414141" >Southern Asia</text>
<text x="184.20" y="272.19" font-size="11" fill="#555555" text-anchor="middle" >2</text>
<text x="200.30" y="271.89" font-size="10.2" fill="#414141" >Albania</text>
<text x="553.90" y="271.89" font-size="10.2" fill="#414141" font-style="italic" text-anchor="end" >2827608</text>
<text x="701.50" y="271.89" font-size="10.2" fill="#414141" font-style="italic" text-anchor="end" >2811655</text>
<text x="707.30" y="271.89" font-size="10.2" fill="#414141" >−0.56%</text>
<text x="855.50" y="271.89" font-size="10.2" fill="#414141" >Europe</text>
<text x="1019.90" y="271.89" font-size="10.2" fill="#414141" >Southern Europe</text>
<text x="184.20" y="291.59" font-size="11" fill="#555555" text-anchor="middle" >3</text>
<text x="200.30" y="291.29" font-size="10.2" fill="#414141" >Algeria</text>
<text x="553.90" y="291.29" font-size="10.2" fill="#414141" font-style="italic" text-anchor="end" >45477389</text>
<text x="701.50" y="291.29" font-size="10.2" fill="#414141" font-style="italic" text-anchor="end" >46164219</text>
<text x="707.30" y="291.29" font-size="10.2" fill="#414141" >+1.51%</text>
<text x="855.50" y="291.29" font-size="10.2" fill="#414141" >Africa</text>
<text x="1019.90" y="291.29" font-size="10.2" fill="#414141" >Northern Africa</text>
<text x="184.20" y="310.99" font-size="11" fill="#555555" text-anchor="middle" >4</text>
<text x="200.30" y="310.69" font-size="10.2" fill="#414141" >American Samoa (United States)</text>
<text x="553.90" y="310.69" font-size="10.2" fill="#414141" font-style="italic" text-anchor="end" >48342</text>
<text x="701.50" y="310.69" font-size="10.2" fill="#414141" font-style="italic" text-anchor="end" >47521</text>
<text x="707.30" y="310.69" font-size="10.2" fill="#414141" >−1.70%</text>
<text x="855.50" y="310.69" font-size="10.2" fill="#414141" >Oceania</text>
<text x="1019.90" y="310.69" font-size="10.2" fill="#414141" >Polynesia</text>
<text x="184.20" y="330.38" font-size="11" fill="#555555" text-anchor="middle" >5</text>
<text x="200.30" y="330.08" font-size="10.2" fill="#414141" >Andorra</text>
<text x="553.90" y="330.08" font-size="10.2" fill="#414141" font-style="italic" text-anchor="end" >79705</text>
<text x="701.50" y="330.08" font-size="10.2" fill="#414141" font-style="italic" text-anchor="end" >80856</text>
<text x="707.30" y="330.08" font-size="10.2" fill="#414141" >+1.44%</text>
<text x="855.50" y="330.08" font-size="10.2" fill="#414141" >Europe</text>
<text x="1019.90" y="330.08" font-size="10.2" fill="#414141" >Southern Europe</text>
<text x="184.20" y="349.78" font-size="11" fill="#555555" text-anchor="middle" >6</text>
<text x="200.30" y="349.48" font-size="10.2" fill="#414141" >Angola</text>
<text x="553.90" y="349.48" font-size="10.2" fill="#414141" font-style="italic" text-anchor="end" >35635029</text>
<text x="701.50" y="349.48" font-size="10.2" fill="#414141" font-style="italic" text-anchor="end" >36749906</text>
<text x="707.30" y="349.48" font-size="10.2" fill="#414141" >+3.13%</text>
<text x="855.50" y="349.48" font-size="10.2" fill="#414141" >Africa</text>
<text x="1019.90" y="349.48" font-size="10.2" fill="#414141" >Middle Africa</text>
<text x="184.20" y="369.17" font-size="11" fill="#555555" text-anchor="middle" >7</text>
<text x="200.30" y="368.87" font-size="10.2" fill="#414141" >Anguilla (United Kingdom)</text>
<text x="553.90" y="368.87" font-size="10.2" fill="#414141" font-style="italic" text-anchor="end" >14180</text>
<text x="701.50" y="368.87" font-size="10.2" fill="#414141" font-style="italic" text-anchor="end" >14410</text>
<text x="707.30" y="368.87" font-size="10.2" fill="#414141" >+1.62%</text>
<text x="855.50" y="368.87" font-size="10.2" fill="#414141" >Americas</text>
<text x="1019.90" y="368.87" font-size="10.2" fill="#414141" >Caribbean</text>
<text x="184.20" y="388.56" font-size="11" fill="#555555" text-anchor="middle" >8</text>
<text x="200.30" y="388.26" font-size="10.2" fill="#414141" >Antigua and Barbuda</text>
<text x="553.90" y="388.26" font-size="10.2" fill="#414141" font-style="italic" text-anchor="end" >92840</text>
<text x="701.50" y="388.26" font-size="10.2" fill="#414141" font-style="italic" text-anchor="end" >93316</text>
<text x="707.30" y="388.26" font-size="10.2" fill="#414141" >+0.51%</text>
<text x="855.50" y="388.26" font-size="10.2" fill="#414141" >Americas</text>
<text x="1019.90" y="388.26" font-size="10.2" fill="#414141" >Caribbean</text>
<text x="184.20" y="407.96" font-size="11" fill="#555555" text-anchor="middle" >9</text>
<text x="200.30" y="407.66" font-size="10.2" fill="#414141" >Argentina</text>
<text x="553.90" y="407.66" font-size="10.2" fill="#414141" font-style="italic" text-anchor="end" >45407904</text>
<text x="701.50" y="407.66" font-size="10.2" fill="#414141" font-style="italic" text-anchor="end" >45538401</text>
<text x="707.30" y="407.66" font-size="10.2" fill="#414141" >+0.29%</text>
<text x="855.50" y="407.66" font-size="10.2" fill="#414141" >Americas</text>
<text x="1019.90" y="407.66" font-size="10.2" fill="#414141" >South America</text>
<text x="184.20" y="427.36" font-size="11" fill="#555555" text-anchor="middle" >10</text>
<text x="200.30" y="427.06" font-size="10.2" fill="#414141" >Armenia</text>
<text x="553.90" y="427.06" font-size="10.2" fill="#414141" font-style="italic" text-anchor="end" >2880874</text>
<text x="701.50" y="427.06" font-size="10.2" fill="#414141" font-style="italic" text-anchor="end" >2943393</text>
<text x="707.30" y="427.06" font-size="10.2" fill="#414141" >+2.17%</text>
<text x="855.50" y="427.06" font-size="10.2" fill="#414141" >Asia</text>
<text x="1019.90" y="427.06" font-size="10.2" fill="#414141" >Western Asia</text>
<text x="184.20" y="446.75" font-size="11" fill="#555555" text-anchor="middle" >11</text>
<text x="200.30" y="446.45" font-size="10.2" fill="#414141" >Aruba (Netherlands)</text>
<text x="553.90" y="446.45" font-size="10.2" fill="#414141" font-style="italic" text-anchor="end" >107782</text>
<text x="701.50" y="446.45" font-size="10.2" fill="#414141" font-style="italic" text-anchor="end" >107939</text>
<text x="707.30" y="446.45" font-size="10.2" fill="#414141" >+0.15%</text>
<text x="855.50" y="446.45" font-size="10.2" fill="#414141" >Americas</text>
<text x="1019.90" y="446.45" font-size="10.2" fill="#414141" >Caribbean</text>
<text x="184.20" y="466.15" font-size="11" fill="#555555" text-anchor="middle" >12</text>
<text x="200.30" y="465.85" font-size="10.2" fill="#414141" >Australia[f]</text>
<text x="553.90" y="465.85" font-size="10.2" fill="#414141" font-style="italic" text-anchor="end" >26200984</text>
<text x="701.50" y="465.85" font-size="10.2" fill="#414141" font-style="italic" text-anchor="end" >26451124</text>
<text x="707.30" y="465.85" font-size="10.2" fill="#414141" >+0.95%</text>
<text x="855.50" y="465.85" font-size="10.2" fill="#414141" >Oceania</text>
<text x="1019.90" y="465.85" font-size="10.2" fill="#414141" >Australia and New Zealand</text>
<text x="184.20" y="485.54" font-size="11" fill="#555555" text-anchor="middle" >13</text>
<text x="200.30" y="485.24" font-size="10.2" fill="#414141" >Austria</text>
<text x="553.90" y="485.24" font-size="10.2" fill="#414141" font-style="italic" text-anchor="end" >9064677</text>
<text x="701.50" y="485.24" font-size="10.2" fill="#414141" font-style="italic" text-anchor="end" >9130429</text>
<text x="707.30" y="485.24" font-size="10.2" fill="#414141" >+0.73%</text>
<text x="855.50" y="485.24" font-size="10.2" fill="#414141" >Europe</text>
<text x="1019.90" y="485.24" font-size="10.2" fill="#414141" >Western Europe</text>
<text x="184.20" y="504.94" font-size="11" fill="#555555" text-anchor="middle" >14</text>
<text x="200.30" y="504.63" font-size="10.2" fill="#414141" >Azerbaijan</text>
<text x="553.90" y="504.63" font-size="10.2" fill="#414141" font-style="italic" text-anchor="end" >10295304</text>
<text x="701.50" y="504.63" font-size="10.2" fill="#414141" font-style="italic" text-anchor="end" >10318207</text>
<text x="707.30" y="504.63" font-size="10.2" fill="#414141" >+0.22%</text>
<text x="855.50" y="504.63" font-size="10.2" fill="#414141" >Asia</text>
<text x="1019.90" y="504.63" font-size="10.2" fill="#414141" >Western Asia</text>
<text x="184.20" y="524.33" font-size="11" fill="#555555" text-anchor="middle" >15</text>
<text x="200.30" y="524.03" font-size="10.2" fill="#414141" >Bahamas</text>
<text x="553.90" y="524.03" font-size="10.2" fill="#414141" font-style="italic" text-anchor="end" >397538</text>
<text x="701.50" y="524.03" font-size="10.2" fill="#414141" font-style="italic" text-anchor="end" >399440</text>
<text x="707.30" y="524.03" font-size="10.2" fill="#414141" >+0.48%</text>
<text x="855.50" y="524.03" font-size="10.2" fill="#414141" >Americas</text>
<text x="1019.90" y="524.03" font-size="10.2" fill="#414141" >Caribbean</text>
<text x="184.20" y="543.72" font-size="11" fill="#555555" text-anchor="middle" >16</text>
<text x="200.30" y="543.42" font-size="10.2" fill="#414141" >Bahrain</text>
<text x="553.90" y="543.42" font-size="10.2" fill="#414141" font-style="italic" text-anchor="end" >1533459</text>
<text x="701.50" y="543.42" font-size="10.2" fill="#414141" font-style="italic" text-anchor="end" >1569666</text>
<text x="707.30" y="543.42" font-size="10.2" fill="#414141" >+2.36%</text>
<text x="855.50" y="543.42" font-size="10.2" fill="#414141" >Asia</text>
<text x="1019.90" y="543.42" font-size="10.2" fill="#414141" >Western Asia</text>
<text x="184.20" y="563.12" font-size="11" fill="#555555" text-anchor="middle" >17</text>
<text x="200.30" y="562.82" font-size="10.2" fill="#414141" >Bangladesh</text>
<text x="553.90" y="562.82" font-size="10.2" fill="#414141" font-style="italic" text-anchor="end" >169384897</text>
<text x="701.50" y="562.82" font-size="10.2" fill="#414141" font-style="italic" text-anchor="end" >171466990</text>
<text x="707.30" y="562.82" font-size="10.2" fill="#414141" >+1.23%</text>
<text x="855.50" y="562.82" font-size="10.2" fill="#414141" >Asia</text>
<text x="1019.90" y="562.82" font-size="10.2" fill="#414141" >Southern Asia</text>
<text x="184.20" y="582.51" font-size="11" fill="#555555" text-anchor="middle" >18</text>
<text x="200.30" y="582.21" font-size="10.2" fill="#414141" >Barbados</text>
<text x="553.90" y="582.21" font-size="10.2" fill="#414141" font-style="italic" text-anchor="end" >288318</text>
<text x="701.50" y="582.21" font-size="10.2" fill="#414141" font-style="italic" text-anchor="end" >282336</text>
<text x="707.30" y="582.21" font-size="10.2" fill="#414141" >−2.07%</text>
<text x="855.50" y="582.21" font-size="10.2" fill="#414141" >Americas</text>
<text x="1019.90" y="582.21" font-size="10.2" fill="#414141" >Caribbean</text>
<text x="184.20" y="601.91" font-size="11" fill="#555555" text-anchor="middle" >19</text>
<text x="200.30" y="601.61" font-size="10.2" fill="#414141" >Belarus</text>
<text x="553.90" y="601.61" font-size="10.2" fill="#414141" font-style="italic" text-anchor="end" >9173237</text>
<text x="701.50" y="601.61" font-size="10.2" fill="#414141" font-style="italic" text-anchor="end" >9115680</text>
<text x="707.30" y="601.61" font-size="10.2" fill="#414141" >−0.63%</text>
<text x="855.50" y="601.61" font-size="10.2" fill="#414141" >Europe</text>
<text x="1019.90" y="601.61" font-size="10.2" fill="#414141" >Eastern Europe</text>
<text x="184.20" y="621.30" font-size="11" fill="#555555" text-anchor="middle" >20</text>
<text x="200.30" y="621.00" font-size="10.2" fill="#414141" >Belgium</text>
<text x="553.90" y="621.00" font-size="10.2" fill="#414141" font-style="italic" text-anchor="end" >11641820</text>
<text x="701.50" y="621.00" font-size="10.2" fill="#414141" font-style="italic" text-anchor="end" >11712893</text>
<text x="707.30" y="621.00" font-size="10.2" fill="#414141" >+0.61%</text>
<text x="855.50" y="621.00" font-size="10.2" fill="#414141" >Europe</text>
<text x="1019.90" y="621.00" font-size="10.2" fill="#414141" >Western Europe</text>
<text x="184.20" y="640.70" font-size="11" fill="#555555" text-anchor="middle" >21</text>
<text x="200.30" y="640.40" font-size="10.2" fill="#414141" >Belize</text>
<text x="553.90" y="640.40" font-size="10.2" fill="#414141" font-style="italic" text-anchor="end" >402733</text>
<text x="701.50" y="640.40" font-size="10.2" fill="#414141" font-style="italic" text-anchor="end" >411106</text>
<text x="707.30" y="640.40" font-size="10.2" fill="#414141" >+2.08%</text>
<text x="855.50" y="640.40" font-size="10.2" fill="#414141" >Americas</text>
<text x="1019.90" y="640.40" font-size="10.2" fill="#414141" >Central America</text>
<text x="184.20" y="660.10" font-size="11" fill="#555555" text-anchor="middle" >22</text>
<text x="200.30" y="659.80" font-size="10.2" fill="#414141" >Benin</text>
<text x="553.90" y="659.80" font-size="10.2" fill="#414141" font-style="italic" text-anchor="end" >13759501</text>
<text x="701.50" y="659.80" font-size="10.2" fill="#414141" font-style="italic" text-anchor="end" >14111034</text>
<text x="707.30" y="659.80" font-size="10.2" fill="#414141" >+2.55%</text>
<text x="855.50" y="659.80" font-size="10.2" fill="#414141" >Africa</text>
<text x="1019.90" y="659.80" font-size="10.2" fill="#414141" >Western Africa</text>
<text x="184.20" y="679.49" font-size="11" fill="#555555" text-anchor="middle" >23</text>
<text x="200.30" y="679.19" font-size="10.2" fill="#414141" >Bermuda (United Kingdom)</text>
<text x="553.90" y="679.19" font-size="10.2" fill="#414141" font-style="italic" text-anchor="end" >64749</text>
<text x="701.50" y="679.19" font-size="10.2" fill="#414141" font-style="italic" text-anchor="end" >64698</text>
<text x="707.30" y="679.19" font-size="10.2" fill="#414141" >−0.08%</text>
<text x="855.50" y="679.19" font-size="10.2" fill="#414141" >Americas</text>
<text x="1019.90" y="679.19" font-size="10.2" fill="#414141" >Northern America</text>
<text x="184.20" y="698.88" font-size="11" fill="#555555" text-anchor="middle" >24</text>
<text x="200.30" y="698.59" font-size="10.2" fill="#414141" >Bhutan</text>
<text x="553.90" y="698.59" font-size="10.2" fill="#414141" font-style="italic" text-anchor="end" >780914</text>
<text x="701.50" y="698.59" font-size="10.2" fill="#414141" font-style="italic" text-anchor="end" >786385</text>
<text x="707.30" y="698.59" font-size="10.2" fill="#414141" >+0.70%</text>
<text x="855.50" y="698.59" font-size="10.2" fill="#414141" >Asia</text>
<text x="1019.90" y="698.59" font-size="10.2" fill="#414141" >Southern Asia</text>
<text x="184.20" y="718.28" font-size="11" fill="#555555" text-anchor="middle" >25</text>
<text x="200.30" y="717.98" font-size="10.2" fill="#414141" >Bolivia</text>
<text x="553.90" y="717.98" font-size="10.2" fill="#414141" font-style="italic" text-anchor="end" >12077154</text>
<text x="701.50" y="717.98" font-size="10.2" fill="#414141" font-style="italic" text-anchor="end" >12244159</text>
<text x="707.30" y="717.98" font-size="10.2" fill="#414141" >+1.38%</text>
<text x="855.50" y="717.98" font-size="10.2" fill="#414141" >Americas</text>
<text x="1019.90" y="717.98" font-size="10.2" fill="#414141" >South America</text>
<text x="184.20" y="737.67" font-size="11" fill="#555555" text-anchor="middle" >26</text>
<text x="200.30" y="737.38" font-size="10.2" fill="#414141" >Bosnia and Herzegovina</text>
<text x="553.90" y="737.38" font-size="10.2" fill="#414141" font-style="italic" text-anchor="end" >3204802</text>
<text x="701.50" y="737.38" font-size="10.2" fill="#414141" font-style="italic" text-anchor="end" >3185073</text>
<text x="707.30" y="737.38" font-size="10.2" fill="#414141" >−0.62%</text>
<text x="855.50" y="737.38" font-size="10.2" fill="#414141" >Europe</text>
<text x="1019.90" y="737.38" font-size="10.2" fill="#414141" >Southern Europe</text>
<text x="184.20" y="757.07" font-size="11" fill="#555555" text-anchor="middle" >27</text>
<text x="200.30" y="756.77" font-size="10.2" fill="#414141" >Botswana</text>
<text x="553.90" y="756.77" font-size="10.2" fill="#414141" font-style="italic" text-anchor="end" >2439892</text>
<text x="701.50" y="756.77" font-size="10.2" fill="#414141" font-style="italic" text-anchor="end" >2480244</text>
<text x="707.30" y="756.77" font-size="10.2" fill="#414141" >+1.65%</text>
<text x="855.50" y="756.77" font-size="10.2" fill="#414141" >Africa</text>
<text x="1019.90" y="756.77" font-size="10.2" fill="#414141" >Southern Africa</text>
<text x="184.20" y="776.46" font-size="11" fill="#555555" text-anchor="middle" >28</text>
<text x="200.30" y="776.16" font-size="10.2" fill="#414141" >Brazil</text>
<text x="553.90" y="776.16" font-size="10.2" fill="#414141" font-style="italic" text-anchor="end" >210306415</text>
<text x="701.50" y="776.16" font-size="10.2" fill="#414141" font-style="italic" text-anchor="end" >211140729</text>
<text x="707.30" y="776.16" font-size="10.2" fill="#414141" >+0.40%</text>
<text x="855.50" y="776.16" font-size="10.2" fill="#414141" >Americas</text>
<text x="1019.90" y="776.16" font-size="10.2" fill="#414141" >South America</text>
<text x="184.20" y="795.86" font-size="11" fill="#555555" text-anchor="middle" >29</text>
<text x="200.30" y="795.56" font-size="10.2" fill="#414141" >British Virgin Islands (United Kingdom)</text>
<text x="553.90" y="795.56" font-size="10.2" fill="#414141" font-style="italic" text-anchor="end" >38319</text>
<text x="701.50" y="795.56" font-size="10.2" fill="#414141" font-style="italic" text-anchor="end" >38985</text>
<text x="707.30" y="795.56" font-size="10.2" fill="#414141" >+1.74%</text>
<text x="855.50" y="795.56" font-size="10.2" fill="#414141" >Americas</text>
<text x="1019.90" y="795.56" font-size="10.2" fill="#414141" >Caribbean</text>
<text x="184.20" y="815.25" font-size="11" fill="#555555" text-anchor="middle" >30</text>
<text x="200.30" y="814.96" font-size="10.2" fill="#414141" >Brunei</text>
<text x="553.90" y="814.96" font-size="10.2" fill="#414141" font-style="italic" text-anchor="end" >455370</text>
<text x="701.50" y="814.96" font-size="10.2" fill="#414141" font-style="italic" text-anchor="end" >458949</text>
<text x="707.30" y="814.96" font-size="10.2" fill="#414141" >+0.79%</text>
<text x="855.50" y="814.96" font-size="10.2" fill="#414141" >Asia</text>
<text x="1019.90" y="814.96" font-size="10.2" fill="#414141" >South-eastern Asia</text>
<text x="184.20" y="834.65" font-size="11" fill="#555555" text-anchor="middle" >31</text>
<text x="200.30" y="834.35" font-size="10.2" fill="#414141" >Bulgaria</text>
<text x="553.90" y="834.35" font-size="10.2" fill="#414141" font-style="italic" text-anchor="end" >6825864</text>
<text x="701.50" y="834.35" font-size="10.2" fill="#414141" font-style="italic" text-anchor="end" >6795803</text>
<text x="707.30" y="834.35" font-size="10.2" fill="#414141" >−0.44%</text>
<text x="855.50" y="834.35" font-size="10.2" fill="#414141" >Europe</text>
<text x="1019.90" y="834.35" font-size="10.2" fill="#414141" >Eastern Europe</text>
<text x="184.20" y="854.04" font-size="11" fill="#555555" text-anchor="middle" >32</text>
<text x="200.30" y="853.75" font-size="10.2" fill="#414141" >Burkina Faso</text>
<text x="553.90" y="853.75" font-size="10.2" fill="#414141" font-style="italic" text-anchor="end" >22509038</text>
<text x="701.50" y="853.75" font-size="10.2" fill="#414141" font-style="italic" text-anchor="end" >23025776</text>
<text x="707.30" y="853.75" font-size="10.2" fill="#414141" >+2.30%</text>
<text x="855.50" y="853.75" font-size="10.2" fill="#414141" >Africa</text>
<text x="1019.90" y="853.75" font-size="10.2" fill="#414141" >Western Africa</text>
<text x="184.20" y="873.44" font-size="11" fill="#555555" text-anchor="middle" >33</text>
<text x="200.30" y="873.14" font-size="10.2" fill="#414141" >Burundi</text>
<text x="553.90" y="873.14" font-size="10.2" fill="#414141" font-style="italic" text-anchor="end" >13321097</text>
<text x="701.50" y="873.14" font-size="10.2" fill="#414141" font-style="italic" text-anchor="end" >13689450</text>
<text x="707.30" y="873.14" font-size="10.2" fill="#414141" >+2.77%</text>
<text x="855.50" y="873.14" font-size="10.2" fill="#414141" >Africa</text>
<text x="1019.90" y="873.14" font-size="10.2" fill="#414141" >Eastern Africa</text>
<text x="184.20" y="892.83" font-size="11" fill="#555555" text-anchor="middle" >34</text>
<text x="200.30" y="892.53" font-size="10.2" fill="#414141" >Cambodia</text>
<text x="553.90" y="892.53" font-size="10.2" fill="#414141" font-style="italic" text-anchor="end" >17201724</text>
<text x="701.50" y="892.53" font-size="10.2" fill="#414141" font-style="italic" text-anchor="end" >17423880</text>
<text x="707.30" y="892.53" font-size="10.2" fill="#414141" >+1.29%</text>
<text x="855.50" y="892.53" font-size="10.2" fill="#414141" >Asia</text>
<text x="1019.90" y="892.53" font-size="10.2" fill="#414141" >South-eastern Asia</text>
<text x="184.20" y="912.23" font-size="11" fill="#555555" text-anchor="middle" >35</text>
<text x="200.30" y="911.93" font-size="10.2" fill="#414141" >Cameroon</text>
<text x="553.90" y="911.93" font-size="10.2" fill="#414141" font-style="italic" text-anchor="end" >27632771</text>
<text x="701.50" y="911.93" font-size="10.2" fill="#414141" font-style="italic" text-anchor="end" >28372687</text>
<text x="707.30" y="911.93" font-size="10.2" fill="#414141" >+2.68%</text>
<text x="855.50" y="911.93" font-size="10.2" fill="#414141" >Africa</text>
<text x="1019.90" y="911.93" font-size="10.2" fill="#414141" >Middle Africa</text>
<text x="184.20" y="931.62" font-size="11" fill="#555555" text-anchor="middle" >36</text>
<text x="200.30" y="931.32" font-size="10.2" fill="#414141" >Canada</text>
<text x="553.90" y="931.32" font-size="10.2" fill="#414141" font-style="italic" text-anchor="end" >38821259</text>
<text x="701.50" y="931.32" font-size="10.2" fill="#414141" font-style="italic" text-anchor="end" >39299105</text>
<text x="707.30" y="931.32" font-size="10.2" fill="#414141" >+1.23%</text>
<text x="855.50" y="931.32" font-size="10.2" fill="#414141" >Americas</text>
<text x="1019.90" y="931.32" font-size="10.2" fill="#414141" >Northern America</text>
<text x="184.20" y="951.02" font-size="11" fill="#555555" text-anchor="middle" >37</text>
<text x="200.30" y="950.72" font-size="10.2" fill="#414141" >Cape Verde</text>
<text x="553.90" y="950.72" font-size="10.2" fill="#414141" font-style="italic" text-anchor="end" >519741</text>
<text x="701.50" y="950.72" font-size="10.2" fill="#414141" font-style="italic" text-anchor="end" >522331</text>
<text x="707.30" y="950.72" font-size="10.2" fill="#414141" >+0.50%</text>
<text x="855.50" y="950.72" font-size="10.2" fill="#414141" >Africa</text>
<text x="1019.90" y="950.72" font-size="10.2" fill="#414141" >Western Africa</text>
<text x="184.20" y="970.41" font-size="11" fill="#555555" text-anchor="middle" >38</text>
<text x="200.30" y="970.12" font-size="10.2" fill="#414141" >Caribbean Netherlands (Netherlands)[v]</text>
<text x="553.90" y="970.12" font-size="10.2" fill="#414141" font-style="italic" text-anchor="end" >28627</text>
<text x="701.50" y="970.12" font-size="10.2" fill="#414141" font-style="italic" text-anchor="end" >29898</text>
<text x="707.30" y="970.12" font-size="10.2" fill="#414141" >+4.44%</text>
<text x="855.50" y="970.12" font-size="10.2" fill="#414141" >Americas</text>
<text x="1019.90" y="970.12" font-size="10.2" fill="#414141" >Caribbean</text>
<text x="184.20" y="989.81" font-size="11" fill="#555555" text-anchor="middle" >39</text>
<text x="200.30" y="989.51" font-size="10.2" fill="#414141" >Cayman Islands (United Kingdom)</text>
<text x="553.90" y="989.51" font-size="10.2" fill="#414141" font-style="italic" text-anchor="end" >71591</text>
<text x="701.50" y="989.51" font-size="10.2" fill="#414141" font-style="italic" text-anchor="end" >73038</text>
<text x="707.30" y="989.51" font-size="10.2" fill="#414141" >+2.02%</text>
<text x="855.50" y="989.51" font-size="10.2" fill="#414141" >Americas</text>
<text x="1019.90" y="989.51" font-size="10.2" fill="#414141" >Caribbean</text>
<text x="184.20" y="1009.20" font-size="11" fill="#555555" text-anchor="middle" >40</text>
<text x="200.30" y="1008.90" font-size="10.2" fill="#414141" >Central African Republic</text>
<text x="553.90" y="1008.90" font-size="10.2" fill="#414141" font-style="italic" text-anchor="end" >5579144</text>
<text x="701.50" y="1008.90" font-size="10.2" fill="#414141" font-style="italic" text-anchor="end" >5152421</text>
<text x="707.30" y="1008.90" font-size="10.2" fill="#414141" >−1.07%</text>
<text x="855.50" y="1008.90" font-size="10.2" fill="#414141" >Africa</text>
<text x="1019.90" y="1008.90" font-size="10.2" fill="#414141" >Middle Africa</text>
</g>
<rect x="1198" y="239.3" width="14.6" height="762" fill="#efefef" />
<rect x="1198" y="271" width="14.2" height="551" fill="#cdcdcd" />
<path d="M1200.3 262.8l5.1-5.8 5.1 5.8" fill="none" stroke="#5e5e5e" stroke-width="2.3"/>
<path d="M1200.3 979.6l5.1 5.6 5.1-5.6" fill="none" stroke="#5e5e5e" stroke-width="2.1"/>
<rect x="1216.8" y="177" width="1" height="826" fill="#d9d9d9"/>
<text x="1230.00" y="209.70" font-size="19" fill="#5a9f7d" textLength="113.80" lengthAdjust="spacingAndGlyphs" >Query Settings</text>
<path d="M1501.5 199.2l10.2 10.2M1511.7 199.2l-10.2 10.2" stroke="#6a6a6a" stroke-width="1.1"/>
<path d="M1233.2 236.2v6.2h-6.2z" fill="#5a5a5a"/>
<text x="1238.40" y="243.00" font-size="11" fill="#217346" font-weight="700" textLength="65.00" lengthAdjust="spacingAndGlyphs" >PROPERTIES</text>
<text x="1238.80" y="262.20" font-size="11.4" fill="#3a3a3a" textLength="29.60" lengthAdjust="spacingAndGlyphs" >Name</text>
<rect x="1239.5" y="266.5" width="274" height="19.6" fill="#ffffff" stroke="#bdbdbd" stroke-width="1"/>
<text x="1243.90" y="281.00" font-size="10.8" fill="#5a5a5a" textLength="64.00" lengthAdjust="spacingAndGlyphs" >wiki-countries</text>
<text x="1238.40" y="305.10" font-size="11" fill="#4272b8" textLength="66.00" lengthAdjust="spacingAndGlyphs" >All Properties</text>
<path d="M1233.2 327.9v6.2h-6.2z" fill="#5a5a5a"/>
<text x="1238.40" y="336.70" font-size="11" fill="#217346" font-weight="700" textLength="80.00" lengthAdjust="spacingAndGlyphs" >APPLIED STEPS</text>
<rect x="1239.5" y="345" width="274" height="638.6" fill="#ffffff" stroke="#bdbdbd" stroke-width="1"/>
<rect x="1240" y="456.8" width="273" height="17.6" fill="#d4eedf" />
<text x="1257.70" y="359.80" font-size="11.6" fill="#3a3a3a" textLength="33.90" lengthAdjust="spacingAndGlyphs" >Source</text>
<g><rect x="1499.6000000000001" y="350.6" width="2.2" height="2.6" fill="#9a9a9a" transform="rotate(0 1500.7 355.6)"/><rect x="1499.6000000000001" y="350.6" width="2.2" height="2.6" fill="#9a9a9a" transform="rotate(45 1500.7 355.6)"/><rect x="1499.6000000000001" y="350.6" width="2.2" height="2.6" fill="#9a9a9a" transform="rotate(90 1500.7 355.6)"/><rect x="1499.6000000000001" y="350.6" width="2.2" height="2.6" fill="#9a9a9a" transform="rotate(135 1500.7 355.6)"/><rect x="1499.6000000000001" y="350.6" width="2.2" height="2.6" fill="#9a9a9a" transform="rotate(180 1500.7 355.6)"/><rect x="1499.6000000000001" y="350.6" width="2.2" height="2.6" fill="#9a9a9a" transform="rotate(225 1500.7 355.6)"/><rect x="1499.6000000000001" y="350.6" width="2.2" height="2.6" fill="#9a9a9a" transform="rotate(270 1500.7 355.6)"/><rect x="1499.6000000000001" y="350.6" width="2.2" height="2.6" fill="#9a9a9a" transform="rotate(315 1500.7 355.6)"/><circle cx="1500.7" cy="355.6" r="3.6" fill="#9a9a9a"/><circle cx="1500.7" cy="355.6" r="1.8" fill="#ffffff"/></g>
<text x="1257.70" y="378.30" font-size="11.6" fill="#3a3a3a" textLength="130.70" lengthAdjust="spacingAndGlyphs" >Extracted Table From Html</text>
<g><rect x="1499.6000000000001" y="369.1" width="2.2" height="2.6" fill="#9a9a9a" transform="rotate(0 1500.7 374.1)"/><rect x="1499.6000000000001" y="369.1" width="2.2" height="2.6" fill="#9a9a9a" transform="rotate(45 1500.7 374.1)"/><rect x="1499.6000000000001" y="369.1" width="2.2" height="2.6" fill="#9a9a9a" transform="rotate(90 1500.7 374.1)"/><rect x="1499.6000000000001" y="369.1" width="2.2" height="2.6" fill="#9a9a9a" transform="rotate(135 1500.7 374.1)"/><rect x="1499.6000000000001" y="369.1" width="2.2" height="2.6" fill="#9a9a9a" transform="rotate(180 1500.7 374.1)"/><rect x="1499.6000000000001" y="369.1" width="2.2" height="2.6" fill="#9a9a9a" transform="rotate(225 1500.7 374.1)"/><rect x="1499.6000000000001" y="369.1" width="2.2" height="2.6" fill="#9a9a9a" transform="rotate(270 1500.7 374.1)"/><rect x="1499.6000000000001" y="369.1" width="2.2" height="2.6" fill="#9a9a9a" transform="rotate(315 1500.7 374.1)"/><circle cx="1500.7" cy="374.1" r="3.6" fill="#9a9a9a"/><circle cx="1500.7" cy="374.1" r="1.8" fill="#ffffff"/></g>
<text x="1257.70" y="396.80" font-size="11.6" fill="#3a3a3a" textLength="92.70" lengthAdjust="spacingAndGlyphs" >Promoted Headers</text>
<g><rect x="1499.6000000000001" y="387.6" width="2.2" height="2.6" fill="#9a9a9a" transform="rotate(0 1500.7 392.6)"/><rect x="1499.6000000000001" y="387.6" width="2.2" height="2.6" fill="#9a9a9a" transform="rotate(45 1500.7 392.6)"/><rect x="1499.6000000000001" y="387.6" width="2.2" height="2.6" fill="#9a9a9a" transform="rotate(90 1500.7 392.6)"/><rect x="1499.6000000000001" y="387.6" width="2.2" height="2.6" fill="#9a9a9a" transform="rotate(135 1500.7 392.6)"/><rect x="1499.6000000000001" y="387.6" width="2.2" height="2.6" fill="#9a9a9a" transform="rotate(180 1500.7 392.6)"/><rect x="1499.6000000000001" y="387.6" width="2.2" height="2.6" fill="#9a9a9a" transform="rotate(225 1500.7 392.6)"/><rect x="1499.6000000000001" y="387.6" width="2.2" height="2.6" fill="#9a9a9a" transform="rotate(270 1500.7 392.6)"/><rect x="1499.6000000000001" y="387.6" width="2.2" height="2.6" fill="#9a9a9a" transform="rotate(315 1500.7 392.6)"/><circle cx="1500.7" cy="392.6" r="3.6" fill="#9a9a9a"/><circle cx="1500.7" cy="392.6" r="1.8" fill="#ffffff"/></g>
<text x="1257.70" y="415.30" font-size="11.6" fill="#3a3a3a" textLength="71.20" lengthAdjust="spacingAndGlyphs" >Changed Type</text>
<text x="1257.70" y="433.80" font-size="11.6" fill="#3a3a3a" textLength="66.20" lengthAdjust="spacingAndGlyphs" >Filtered Rows</text>
<g><rect x="1499.6000000000001" y="424.6" width="2.2" height="2.6" fill="#9a9a9a" transform="rotate(0 1500.7 429.6)"/><rect x="1499.6000000000001" y="424.6" width="2.2" height="2.6" fill="#9a9a9a" transform="rotate(45 1500.7 429.6)"/><rect x="1499.6000000000001" y="424.6" width="2.2" height="2.6" fill="#9a9a9a" transform="rotate(90 1500.7 429.6)"/><rect x="1499.6000000000001" y="424.6" width="2.2" height="2.6" fill="#9a9a9a" transform="rotate(135 1500.7 429.6)"/><rect x="1499.6000000000001" y="424.6" width="2.2" height="2.6" fill="#9a9a9a" transform="rotate(180 1500.7 429.6)"/><rect x="1499.6000000000001" y="424.6" width="2.2" height="2.6" fill="#9a9a9a" transform="rotate(225 1500.7 429.6)"/><rect x="1499.6000000000001" y="424.6" width="2.2" height="2.6" fill="#9a9a9a" transform="rotate(270 1500.7 429.6)"/><rect x="1499.6000000000001" y="424.6" width="2.2" height="2.6" fill="#9a9a9a" transform="rotate(315 1500.7 429.6)"/><circle cx="1500.7" cy="429.6" r="3.6" fill="#9a9a9a"/><circle cx="1500.7" cy="429.6" r="1.8" fill="#ffffff"/></g>
<text x="1257.70" y="452.30" font-size="11.6" fill="#3a3a3a" textLength="62.20" lengthAdjust="spacingAndGlyphs" >Sorted Rows</text>
<text x="1257.70" y="470.80" font-size="11.6" fill="#3a3a3a" textLength="92.70" lengthAdjust="spacingAndGlyphs" >Renamed Columns</text>
<path d="M1245.5 462.3l8 8M1253.5 462.3l-8 8" stroke="#555" stroke-width="1.2"/>
<rect x="0" y="1003" width="1536" height="19.7" fill="#217346" />
<rect x="0" y="1022.7" width="1536" height="1.3" fill="#b5cdbf" />
<text x="4.10" y="1017.10" font-size="10.6" fill="#ffffff" textLength="109.80" lengthAdjust="spacingAndGlyphs" >6 COLUMNS, 237 ROWS</text>
<text x="128.00" y="1017.10" font-size="10.6" fill="#ffffff" textLength="188.20" lengthAdjust="spacingAndGlyphs" >Column profiling based on top 1000 rows</text>
<text x="1363.00" y="1017.10" font-size="10.6" fill="#ffffff" textLength="167.40" lengthAdjust="spacingAndGlyphs" >PREVIEW DOWNLOADED AT 4:45 PM</text>
</svg></body></html>
